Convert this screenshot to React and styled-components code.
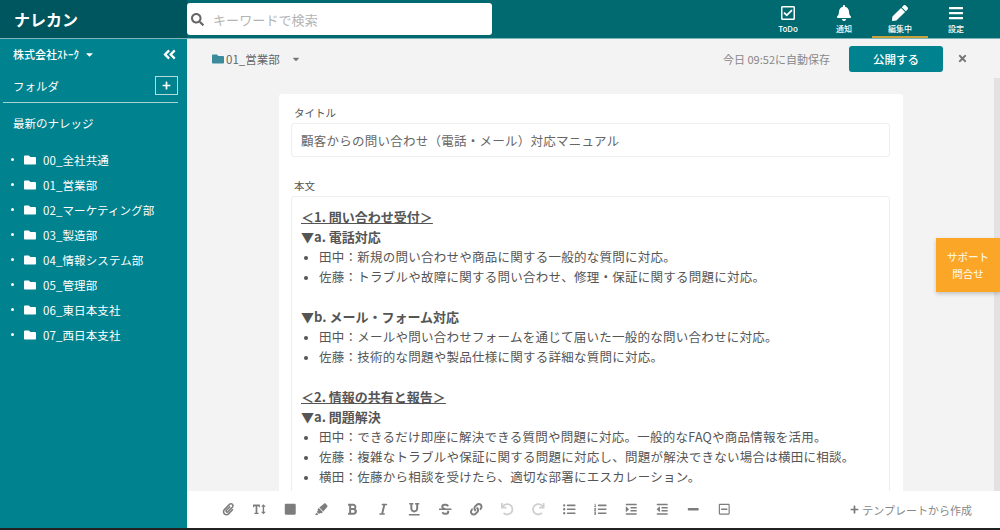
import styled, { createGlobalStyle } from "styled-components";
import {
  FaBell,
  FaBars,
  FaBold,
  FaCaretDown,
  FaFolder,
  FaHighlighter,
  FaIndent,
  FaItalic,
  FaLink,
  FaListOl,
  FaListUl,
  FaMinus,
  FaOutdent,
  FaPaperclip,
  FaPen,
  FaPlus,
  FaRedo,
  FaRegCheckSquare,
  FaRegMinusSquare,
  FaSearch,
  FaSquare,
  FaStrikethrough,
  FaTextHeight,
  FaTimes,
  FaUnderline,
  FaUndo,
  FaAngleDoubleLeft,
} from "react-icons/fa";

const GlobalStyle = createGlobalStyle`
  html, body {
    margin: 0;
    height: 100%;
    overflow: hidden;
  }
  body {
    font-family: "Noto Sans CJK JP", "Noto Sans", sans-serif;
    color: #555;
  }
`;

const Page = styled.div`
  position: relative;
  width: 1000px;
  height: 530px;
  display: flex;
  flex-direction: column;
  overflow: hidden;
  background: #f3f3f3;
  border-bottom: 2px solid #222;
  box-sizing: border-box;
`;

const Header = styled.header`
  height: 38px;
  flex: none;
  display: flex;
  align-items: stretch;
  background: #006a70;
  border-bottom: 1px solid #7fb5b8;
  box-sizing: content-box;
  height: 38px;
`;

const Logo = styled.div`
  width: 187px;
  flex: none;
  padding-left: 14px;
  box-sizing: border-box;
  display: flex;
  align-items: center;
  font-size: 16px;
  font-weight: 700;
  color: #fff;
  background: #00565e;
`;

const SearchBox = styled.div`
  width: 305px;
  height: 32px;
  margin-top: 3px;
  display: flex;
  align-items: center;
  gap: 9px;
  padding-left: 4px;
  box-sizing: border-box;
  background: #fff;
  border-radius: 3px;
  color: #666;
  font-size: 13px;
`;

const SearchHint = styled.span`
  color: #b4b4b4;
  font-size: 13px;
  letter-spacing: 0.1px;
`;

const Nav = styled.nav`
  margin-left: auto;
  display: flex;
  padding-right: 16px;
`;

const NavItem = styled.div`
  width: 56px;
  display: flex;
  flex-direction: column;
  align-items: center;
  gap: 4px;
  padding-top: 5px;
  box-sizing: border-box;
  color: #fff;
  font-size: 8px;
  line-height: 10px;
  font-weight: 500;
  border-bottom: 2px solid ${(props) => (props.$active ? "#c9a13c" : "transparent")};
  height: 38px;
`;

const NavIcon = styled.span`
  height: 15px;
  display: flex;
  align-items: center;
  font-size: 16px;
`;

const Body = styled.div`
  flex: 1;
  min-height: 0;
  display: flex;
`;

const Sidebar = styled.aside`
  width: 187px;
  flex: none;
  background: #00838f;
  color: #fff;
  padding: 6px 9px 0 3px;
  box-sizing: border-box;
`;

const CompanyRow = styled.div`
  display: flex;
  align-items: center;
  height: 18px;
  padding: 0 1px 0 10px;
  font-size: 11px;
  font-weight: 500;
  gap: 5px;
`;

const Collapse = styled.span`
  margin-left: auto;
  font-size: 15px;
  display: flex;
`;

const FolderHead = styled.div`
  margin-top: 9px;
  height: 27px;
  display: flex;
  align-items: center;
  justify-content: space-between;
  padding: 0 0 3px 10px;
  font-size: 11.5px;
  border-bottom: 1px solid #a6d2d6;
`;

const AddButton = styled.span`
  width: 21px;
  height: 17px;
  display: flex;
  align-items: center;
  justify-content: center;
  border: 1px solid #b5dadd;
  font-size: 9px;
`;

const Latest = styled.div`
  margin-top: 11px;
  padding-left: 10px;
  font-size: 11.5px;
  line-height: 18px;
`;

const FolderList = styled.ul`
  list-style: none;
  margin: 15px 0 0;
  padding: 0 0 0 8px;
`;

const FolderItem = styled.li`
  height: 25px;
  display: flex;
  align-items: center;
  font-size: 11.5px;
  letter-spacing: 0.1px;
  &::before {
    content: "";
    width: 3px;
    height: 3px;
    border-radius: 50%;
    background: #fff;
    margin-right: 10px;
  }
  svg {
    font-size: 12px;
    margin-right: 7px;
  }
`;

const Main = styled.main`
  flex: 1;
  min-width: 0;
  display: flex;
  flex-direction: column;
  position: relative;
`;

const TopBar = styled.div`
  height: 39px;
  flex: none;
  display: flex;
  align-items: center;
  padding: 0 32px 0 25px;
  font-size: 11.5px;
  color: #666;
`;

const FolderCrumb = styled.div`
  display: flex;
  align-items: center;
  gap: 2px;
  svg:first-child {
    color: #3a8b9c;
    font-size: 12px;
  }
  svg:last-child {
    color: #777;
    font-size: 10px;
    margin-left: 9px;
  }
`;

const SaveNote = styled.span`
  margin-left: auto;
  color: #888;
  font-size: 11px;
`;

const PublishButton = styled.button`
  width: 94px;
  height: 26px;
  margin-left: 19px;
  border: none;
  border-radius: 3px;
  background: #00838f;
  color: #fff;
  font: 500 11.5px "Noto Sans CJK JP", sans-serif;
`;

const CloseIcon = styled.span`
  margin-left: 14px;
  display: flex;
  font-size: 11px;
  color: #777;
`;

const Scroll = styled.div`
  flex: 1;
  min-height: 0;
  overflow: hidden;
  padding: 16px 0 0 92px;
  border-right: 6px solid #e2e2e2;
`;

const Card = styled.section`
  width: 624px;
  box-sizing: border-box;
  padding: 11px 13px 0 12px;
  background: #fff;
  border-radius: 3px 3px 0 0;
  height: 420px;
`;

const FieldLabel = styled.div`
  padding-left: 3px;
  font-size: 10.5px;
  line-height: 16px;
  color: #555;
`;

const TitleInput = styled.div`
  margin-top: 2px;
  height: 32px;
  display: flex;
  align-items: center;
  padding: 0 9px;
  border: 1px solid #eee;
  border-radius: 3px;
  font-size: 12.5px;
  color: #666;
  letter-spacing: 0.25px;
  margin-bottom: 21px;
`;

const Editor = styled.div`
  margin-top: 2px;
  padding: 10px 9px;
  border: 1px solid #eee;
  border-radius: 3px;
  height: 320px;
  font-size: 12.5px;
  line-height: 20px;
  color: #555;
`;

const Heading = styled.div`
  font-weight: 700;
  text-decoration: underline;
  font-size: 13px;
`;

const SubHeading = styled.div`
  font-weight: 700;
  font-size: 13px;
`;

const Bullets = styled.ul`
  margin: 0 0 20px;
  padding-left: 18px;
  letter-spacing: 0.25px;
  li::marker {
    font-size: 11px;
  }
`;

const Toolbar = styled.div`
  height: 37px;
  flex: none;
  display: flex;
  align-items: center;
  padding: 0 28px 0 26px;
  background: #fff;
  color: #7d7d7d;
  box-sizing: border-box;
`;

const Tool = styled.span`
  width: 31px;
  flex: none;
  display: flex;
  justify-content: center;
  font-size: 12.5px;
  color: ${(props) => (props.$off ? "#cfcfcf" : "#7d7d7d")};
`;

const TemplateLink = styled.div`
  margin-left: auto;
  display: flex;
  align-items: center;
  gap: 3px;
  font-size: 11px;
  color: #888;
  svg {
    font-size: 9px;
    color: #777;
  }
`;

const SupportTab = styled.div`
  position: absolute;
  top: 199px;
  right: 0;
  width: 64px;
  height: 54px;
  display: flex;
  align-items: center;
  justify-content: center;
  text-align: center;
  background: #fba627;
  color: #fff3dc;
  font-size: 10.5px;
  line-height: 17px;
  font-weight: 500;
  box-shadow: 0 2px 4px rgba(0, 0, 0, 0.2);
`;

const folders = [
  "00_全社共通",
  "01_営業部",
  "02_マーケティング部",
  "03_製造部",
  "04_情報システム部",
  "05_管理部",
  "06_東日本支社",
  "07_西日本支社",
];

const navItems = [
  { label: "ToDo", icon: <FaRegCheckSquare /> },
  { label: "通知", icon: <FaBell /> },
  { label: "編集中", icon: <FaPen />, active: true },
  { label: "設定", icon: <FaBars /> },
];

const tools = [
  { icon: <FaPaperclip /> },
  { icon: <FaTextHeight /> },
  { icon: <FaSquare /> },
  { icon: <FaHighlighter /> },
  { icon: <FaBold /> },
  { icon: <FaItalic /> },
  { icon: <FaUnderline /> },
  { icon: <FaStrikethrough /> },
  { icon: <FaLink /> },
  { icon: <FaUndo />, off: true },
  { icon: <FaRedo />, off: true },
  { icon: <FaListUl /> },
  { icon: <FaListOl /> },
  { icon: <FaIndent /> },
  { icon: <FaOutdent /> },
  { icon: <FaMinus /> },
  { icon: <FaRegMinusSquare /> },
];

const App = () => {
  return (
    <Page>
      <GlobalStyle />
      <Header>
        <Logo>ナレカン</Logo>
        <SearchBox>
          <FaSearch />
          <SearchHint>キーワードで検索</SearchHint>
        </SearchBox>
        <Nav>
          {navItems.map((item) => (
            <NavItem key={item.label} $active={item.active}>
              <NavIcon>{item.icon}</NavIcon>
              {item.label}
            </NavItem>
          ))}
        </Nav>
      </Header>
      <Body>
        <Sidebar>
          <CompanyRow>
            株式会社ｽﾄｰｸ <FaCaretDown />
            <Collapse>
              <FaAngleDoubleLeft />
            </Collapse>
          </CompanyRow>
          <FolderHead>
            フォルダ
            <AddButton>
              <FaPlus />
            </AddButton>
          </FolderHead>
          <Latest>最新のナレッジ</Latest>
          <FolderList>
            {folders.map((name) => (
              <FolderItem key={name}>
                <FaFolder />
                {name}
              </FolderItem>
            ))}
          </FolderList>
        </Sidebar>
        <Main>
          <TopBar>
            <FolderCrumb>
              <FaFolder />
              01_営業部
              <FaCaretDown />
            </FolderCrumb>
            <SaveNote>今日 09:52に自動保存</SaveNote>
            <PublishButton>公開する</PublishButton>
            <CloseIcon>
              <FaTimes />
            </CloseIcon>
          </TopBar>
          <Scroll>
            <Card>
              <FieldLabel>タイトル</FieldLabel>
              <TitleInput>顧客からの問い合わせ（電話・メール）対応マニュアル</TitleInput>
              <FieldLabel>本文</FieldLabel>
              <Editor>
                <Heading>＜1. 問い合わせ受付＞</Heading>
                <SubHeading>▼a. 電話対応</SubHeading>
                <Bullets>
                  <li>田中：新規の問い合わせや商品に関する一般的な質問に対応。</li>
                  <li>佐藤：トラブルや故障に関する問い合わせ、修理・保証に関する問題に対応。</li>
                </Bullets>
                <SubHeading>▼b. メール・フォーム対応</SubHeading>
                <Bullets>
                  <li>田中：メールや問い合わせフォームを通じて届いた一般的な問い合わせに対応。</li>
                  <li>佐藤：技術的な問題や製品仕様に関する詳細な質問に対応。</li>
                </Bullets>
                <Heading>＜2. 情報の共有と報告＞</Heading>
                <SubHeading>▼a. 問題解決</SubHeading>
                <Bullets>
                  <li>田中：できるだけ即座に解決できる質問や問題に対応。一般的なFAQや商品情報を活用。</li>
                  <li>佐藤：複雑なトラブルや保証に関する問題に対応し、問題が解決できない場合は横田に相談。</li>
                  <li>横田：佐藤から相談を受けたら、適切な部署にエスカレーション。</li>
                </Bullets>
              </Editor>
            </Card>
          </Scroll>
          <Toolbar>
            {tools.map((tool, i) => (
              <Tool key={i} $off={tool.off}>
                {tool.icon}
              </Tool>
            ))}
            <TemplateLink>
              <FaPlus />
              テンプレートから作成
            </TemplateLink>
          </Toolbar>
          <SupportTab>
            サポート
            <br />
            問合せ
          </SupportTab>
        </Main>
      </Body>
    </Page>
  );
};

export default App;
